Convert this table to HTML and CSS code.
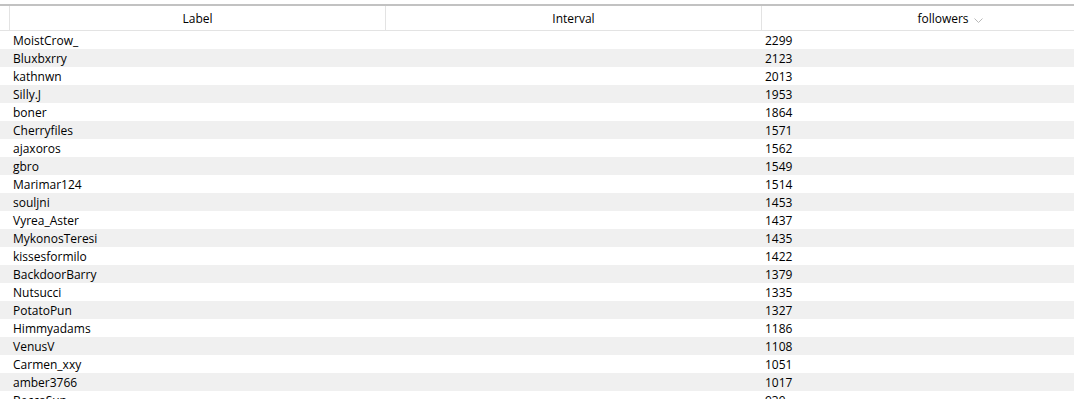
FILE: index.html
```html
<!DOCTYPE html>
<html>
<head>
<meta charset="utf-8">
<link rel="stylesheet" href="styles.css">
</head>
<body>
<div class="grid">
  <div class="topbar"></div>
  <div class="row head">
    <div class="cell gutter"></div>
    <div class="cell hcell">Label</div>
    <div class="cell hcell">Interval</div>
    <div class="cell hcell last"><span class="htext">followers<svg class="chev" width="9" height="5" viewBox="0 0 9 5"><path d="M0.5 0.5 L4.5 4.5 L8.5 0.5" fill="none" stroke="#b8b8b8" stroke-width="1"/></svg></span></div>
  </div>
  <div class="body">
    <div class="row"><div class="cell gutter"></div><div class="cell lab">MoistCrow_</div><div class="cell"></div><div class="cell val">2299</div></div>
    <div class="row"><div class="cell gutter"></div><div class="cell lab">Bluxbxrry</div><div class="cell"></div><div class="cell val">2123</div></div>
    <div class="row"><div class="cell gutter"></div><div class="cell lab">kathnwn</div><div class="cell"></div><div class="cell val">2013</div></div>
    <div class="row"><div class="cell gutter"></div><div class="cell lab">Silly.J</div><div class="cell"></div><div class="cell val">1953</div></div>
    <div class="row"><div class="cell gutter"></div><div class="cell lab">boner</div><div class="cell"></div><div class="cell val">1864</div></div>
    <div class="row"><div class="cell gutter"></div><div class="cell lab">Cherryfiles</div><div class="cell"></div><div class="cell val">1571</div></div>
    <div class="row"><div class="cell gutter"></div><div class="cell lab">ajaxoros</div><div class="cell"></div><div class="cell val">1562</div></div>
    <div class="row"><div class="cell gutter"></div><div class="cell lab">gbro</div><div class="cell"></div><div class="cell val">1549</div></div>
    <div class="row"><div class="cell gutter"></div><div class="cell lab">Marimar124</div><div class="cell"></div><div class="cell val">1514</div></div>
    <div class="row"><div class="cell gutter"></div><div class="cell lab">souljni</div><div class="cell"></div><div class="cell val">1453</div></div>
    <div class="row"><div class="cell gutter"></div><div class="cell lab">Vyrea_Aster</div><div class="cell"></div><div class="cell val">1437</div></div>
    <div class="row"><div class="cell gutter"></div><div class="cell lab">MykonosTeresi</div><div class="cell"></div><div class="cell val">1435</div></div>
    <div class="row"><div class="cell gutter"></div><div class="cell lab">kissesformilo</div><div class="cell"></div><div class="cell val">1422</div></div>
    <div class="row"><div class="cell gutter"></div><div class="cell lab">BackdoorBarry</div><div class="cell"></div><div class="cell val">1379</div></div>
    <div class="row"><div class="cell gutter"></div><div class="cell lab">Nutsucci</div><div class="cell"></div><div class="cell val">1335</div></div>
    <div class="row"><div class="cell gutter"></div><div class="cell lab">PotatoPun</div><div class="cell"></div><div class="cell val">1327</div></div>
    <div class="row"><div class="cell gutter"></div><div class="cell lab">Himmyadams</div><div class="cell"></div><div class="cell val">1186</div></div>
    <div class="row"><div class="cell gutter"></div><div class="cell lab">VenusV</div><div class="cell"></div><div class="cell val">1108</div></div>
    <div class="row"><div class="cell gutter"></div><div class="cell lab">Carmen_xxy</div><div class="cell"></div><div class="cell val">1051</div></div>
    <div class="row"><div class="cell gutter"></div><div class="cell lab">amber3766</div><div class="cell"></div><div class="cell val">1017</div></div>
    <div class="row"><div class="cell gutter"></div><div class="cell lab">BeccaSun</div><div class="cell"></div><div class="cell val">939</div></div>
  </div>
</div>
</body>
</html>
```
FILE: styles.css
```css
html, body {
  margin: 0;
  padding: 0;
  background: #ffffff;
  overflow: hidden;
}
body {
  font-family: "Open Sans", "Noto Sans", sans-serif;
  font-size: 12px;
  color: #000000;
}
.grid {
  padding-top: 4px;
  height: 395px;
  overflow: hidden;
}
.topbar {
  height: 2px;
  background: #c2c2c2;
}
.row {
  display: grid;
  grid-template-columns: 10px 376px 376px 1fr;
  height: 18px;
  line-height: 17px;
}
.row .cell {
  padding-top: 1px;
}
.head {
  height: 24px;
  line-height: 23px;
  border-bottom: 1px solid #e3e3e3;
}
.head .gutter,
.head .hcell {
  border-right: 1px solid #e3e3e3;
}
.head .last {
  border-right: none;
  padding-left: 50px;
}
.hcell {
  text-align: center;
  white-space: nowrap;
}
.htext {
  position: relative;
}
.chev {
  position: absolute;
  left: 57px;
  top: 8px;
}
.body .row:nth-child(even) {
  background: #f0f0f0;
}
.cell {
  white-space: nowrap;
  overflow: visible;
}
.lab, .val {
  padding-left: 3px;
}
```
